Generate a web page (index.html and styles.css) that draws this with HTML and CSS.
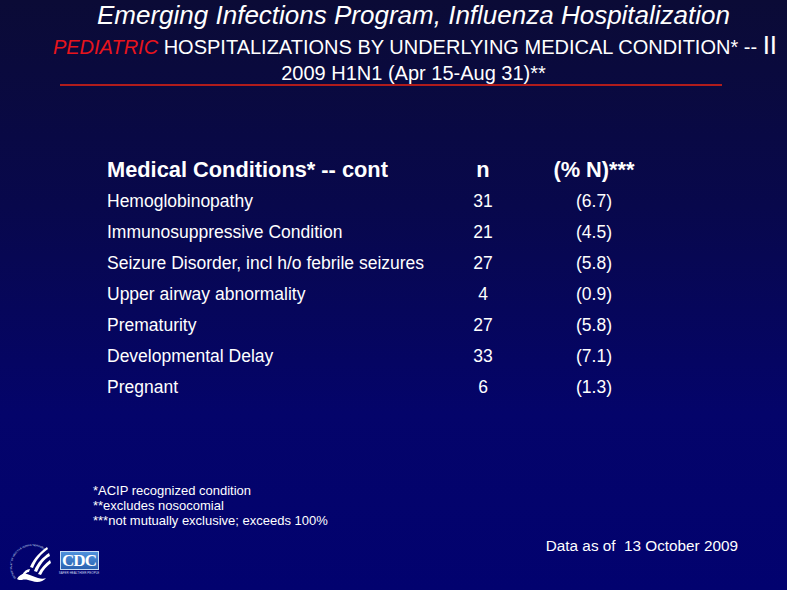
FILE: index.html
```html
<!DOCTYPE html>
<html lang="en">
<head>
<meta charset="utf-8">
<title>Emerging Infections Program, Influenza Hospitalization</title>
<link rel="stylesheet" href="styles.css">
</head>
<body>
<div class="slide">
  <header class="title">
    <h1 class="title-main">Emerging Infections Program, Influenza Hospitalization</h1>
    <p class="title-sub"><span class="red">PEDIATRIC</span> HOSPITALIZATIONS BY UNDERLYING MEDICAL CONDITION* -- <span class="roman">II</span></p>
    <p class="title-sub2">2009 H1N1 (Apr 15-Aug 31)**</p>
    <div class="rule"></div>
  </header>

  <div class="table">
    <div class="row head">
      <span class="c-name">Medical Conditions* -- cont</span>
      <span class="c-n">n</span>
      <span class="c-pct">(% N)***</span>
    </div>
    <div class="row"><span class="c-name">Hemoglobinopathy</span><span class="c-n">31</span><span class="c-pct">(6.7)</span></div>
    <div class="row"><span class="c-name">Immunosuppressive Condition</span><span class="c-n">21</span><span class="c-pct">(4.5)</span></div>
    <div class="row"><span class="c-name">Seizure Disorder, incl h/o febrile seizures</span><span class="c-n">27</span><span class="c-pct">(5.8)</span></div>
    <div class="row"><span class="c-name">Upper airway abnormality</span><span class="c-n">4</span><span class="c-pct">(0.9)</span></div>
    <div class="row"><span class="c-name">Prematurity</span><span class="c-n">27</span><span class="c-pct">(5.8)</span></div>
    <div class="row"><span class="c-name">Developmental Delay</span><span class="c-n">33</span><span class="c-pct">(7.1)</span></div>
    <div class="row"><span class="c-name">Pregnant</span><span class="c-n">6</span><span class="c-pct">(1.3)</span></div>
  </div>

  <div class="notes">
    <p>*ACIP recognized condition</p>
    <p>**excludes nosocomial</p>
    <p>***not mutually exclusive; exceeds 100%</p>
  </div>

  <footer class="foot">
    <div class="logos">
      <svg class="hhs" width="52" height="52" viewBox="0 0 52 52">
        <defs>
          <path id="ring" d="M 12.9 42.1 A 20 20 0 1 1 45.3 18"/>
        </defs>
        <text class="ring-text"><textPath href="#ring">DEPARTMENT OF HEALTH &amp; HUMAN SERVICES</textPath></text>
        <path d="M44 11 C37 16 31 22 27 31 L30 32 C33 24 38 18 45 13 Z" fill="#fff"/>
        <path d="M46 17 C40 21 34 27 31 35 L34 36 C37 29 41 23 47 20 Z" fill="#fff"/>
        <path d="M47 24 C42 28 38 32 35 38 L38 39 C40 34 44 30 48 27 Z" fill="#fff"/>
        <path d="M14 43 C16 39 20 37 24 38 C28 39 31 41 35 42 C38 43 41 43 43 42 C40 46 34 47 29 45 C25 44 22 43 19 44 C17 44 15 44 14 43 Z" fill="#fff"/>
        <path d="M19 39 C21 35 24 33 27 33 L26 36 C24 36 22 38 21 40 Z" fill="#fff"/>
      </svg>
      <div class="cdc">
        <div class="cdc-box">CDC</div>
        <div class="cdc-tag">SAFER·HEALTHIER·PEOPLE</div>
      </div>
    </div>
    <p class="asof">Data as of&nbsp; 13 October 2009</p>
  </footer>
</div>
</body>
</html>
```

FILE: styles.css
```css
html, body {
  margin: 0;
  padding: 0;
  background: #ffffff;
}

.slide {
  width: 787px;
  height: 590px;
  box-sizing: border-box;
  overflow: hidden;
  background: linear-gradient(to bottom, #0b0b36 0%, #08084c 35%, #04046a 70%, #02026f 100%);
  color: #ffffff;
  font-family: "Liberation Sans", Arial, sans-serif;
  display: flex;
  flex-direction: column;
}

.title {
  padding-left: 40px;
  text-align: center;
}

.title-main {
  margin: 0;
  font-size: 26px;
  font-weight: normal;
  font-style: italic;
  line-height: 30px;
}

.title-sub {
  margin: 6px 0 0 3px;
  font-size: 20px;
  line-height: 22px;
}

.red {
  color: #e8141c;
  font-style: italic;
}

.roman {
  font-size: 26px;
  line-height: 10px;
}

.title-sub2 {
  margin: 4px 0 0;
  font-size: 20px;
  line-height: 22px;
}

.rule {
  margin: 0 0 0 20px;
  width: 662px;
  height: 2px;
  background: #b01c1c;
}

.table {
  margin-top: 67px;
  padding-left: 107px;
}

.row {
  display: grid;
  grid-template-columns: 340px 72px 150px;
  height: 31px;
  align-items: center;
  font-size: 17.5px;
}

.row.head {
  height: 33px;
  font-size: 21.8px;
  font-weight: bold;
}

.c-n, .c-pct {
  text-align: center;
}

.notes {
  margin-top: 80px;
  padding-left: 93px;
  font-size: 13px;
  line-height: 15px;
}

.notes p {
  margin: 0;
}

.foot {
  margin-top: 2px;
  display: flex;
  justify-content: space-between;
  align-items: flex-start;
  padding: 0 49px 0 3px;
}

.logos {
  display: flex;
  align-items: flex-start;
  gap: 4px;
}

.hhs {
  display: block;
  margin-top: 6px;
}

.ring-text {
  font-family: "Liberation Sans", Arial, sans-serif;
  font-size: 2.5px;
  fill: #dfe6ff;
}

.cdc {
  display: flex;
  flex-direction: column;
  align-items: center;
  width: 40px;
  margin-top: 21px;
}

.cdc-box {
  width: 39px;
  height: 19px;
  box-sizing: border-box;
  border: 1px solid #c9dcf4;
  background: linear-gradient(to bottom, #4f90dc, #2b62b0);
  color: #ffffff;
  font-family: "Liberation Serif", "Times New Roman", serif;
  font-weight: bold;
  font-size: 17px;
  line-height: 17px;
  text-align: center;
  letter-spacing: -1px;
}

.cdc-tag {
  margin-top: 1px;
  font-size: 3px;
  line-height: 4px;
  color: #c9d6f0;
  white-space: nowrap;
}

.asof {
  margin: 7px 0 0;
  font-size: 15.3px;
  line-height: 18px;
}
```
